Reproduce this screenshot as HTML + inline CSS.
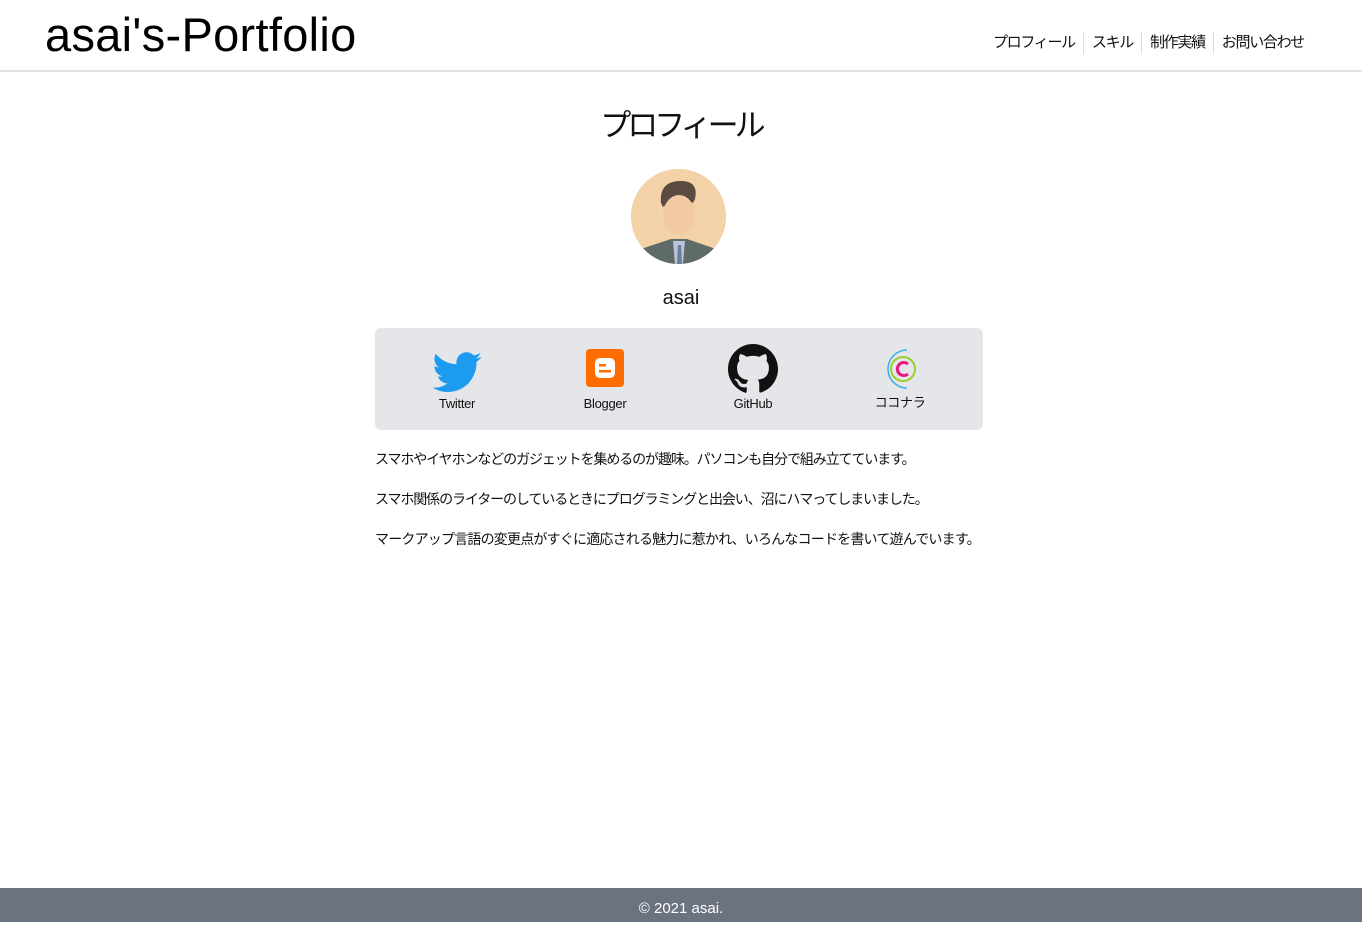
<!DOCTYPE html>
<html><head><meta charset="utf-8"><style>
*{margin:0;padding:0;box-sizing:border-box}
body{width:1362px;height:922px;position:relative;background:#fff;font-family:"Liberation Sans","Noto Sans CJK JP",sans-serif;color:#111;overflow:hidden}
header{height:72px;border-bottom:2px solid #e3e3e3;position:relative}
.logo{position:absolute;left:45px;top:7px;font-size:47px;color:#000;letter-spacing:0.3px}
nav{position:absolute;right:50px;top:32px;font-size:15px;display:flex;letter-spacing:-1.3px}
nav span{padding:0 8px;border-left:1px solid #ddd;line-height:22px}
nav span:first-child{border-left:none}
h1{position:absolute;top:100px;width:100%;text-align:center;font-weight:normal;font-size:31px;letter-spacing:-4px}
.av{position:absolute;left:631px;top:169px;width:95px;height:95px;border-radius:50%;overflow:hidden;background:#f3d5ac}
.name{position:absolute;top:287px;width:100%;text-align:center;font-size:20px}
.box{position:absolute;left:375px;top:328px;width:608px;height:102px;background:#e5e6ea;border-radius:6px}
.it{position:absolute;top:16px;width:100px;text-align:center;font-size:13px;letter-spacing:-0.3px}
.it svg{display:block;margin:0 auto 10px}
p{position:absolute;left:375px;font-size:14px;letter-spacing:-1.1px}
footer{position:absolute;bottom:0;left:0;width:100%;height:34px;background:#6b7280;color:#fff;text-align:center;font-size:15px;line-height:42px}
</style></head><body>
<header><div class="logo">asai's-Portfolio</div>
<nav><span>プロフィール</span><span>スキル</span><span>制作実績</span><span>お問い合わせ</span></nav></header>
<h1>プロフィール</h1>
<div class="av"><svg width="95" height="95"><rect width="95" height="95" fill="#f2d2a6"/><path d="M30 34 Q28 12 50 12 Q68 12 64 30 L62 34 Q48 26 32 38Z" fill="#5b4a42"/><ellipse cx="48" cy="46" rx="16" ry="20" fill="#f2c9a0"/><path d="M0 95 L10 80 L40 70 L56 70 L85 80 L95 95Z" fill="#5e6b68"/><path d="M42 72 L54 72 L52 95 L44 95Z" fill="#b8c3de"/><path d="M47 76 L50 76 L51 95 L46 95Z" fill="#6a7f96"/></svg></div>
<div class="name">asai</div>
<div class="box">
<div class="it" style="left:32px;top:24px"><svg width="50" height="41" viewBox="0 0 24 20" style="margin-bottom:3px"><path fill="#1d9bf0" d="M24 2.4a9.8 9.8 0 0 1-2.8.8A4.9 4.9 0 0 0 23.3.5a9.9 9.9 0 0 1-3.1 1.2A4.9 4.9 0 0 0 11.8 6 14 14 0 0 1 1.7.9a4.9 4.9 0 0 0 1.5 6.6 4.9 4.9 0 0 1-2.2-.6v.1a4.9 4.9 0 0 0 3.9 4.8 4.9 4.9 0 0 1-2.2.1 4.9 4.9 0 0 0 4.6 3.4A9.9 9.9 0 0 1 0 17.3 14 14 0 0 0 7.5 19.5c9 0 14-7.5 14-14v-.6A10 10 0 0 0 24 2.4z"/></svg>Twitter</div>
<div class="it" style="left:180px;top:20px"><svg width="40" height="40" viewBox="0 0 40 40" style="margin-bottom:8px"><rect x="1" y="1" width="38" height="38" rx="4" fill="#ff6d00"/><rect x="10" y="10" width="20" height="20" rx="5" fill="#fff"/><rect x="14" y="16" width="7" height="2.5" fill="#ff6d00"/><rect x="14" y="22" width="12" height="2.5" fill="#ff6d00"/></svg>Blogger</div>
<div class="it" style="left:328px;top:16px"><svg width="52" height="50" viewBox="0 0 16 16" style="margin-bottom:2px"><path fill="#111" d="M8 0C3.6 0 0 3.6 0 8c0 3.5 2.3 6.5 5.5 7.6.4.1.5-.2.5-.4v-1.4c-2.2.5-2.7-1-2.7-1-.4-.9-.9-1.2-.9-1.2-.7-.5.1-.5.1-.5.8.1 1.2.8 1.2.8.7 1.2 1.9.9 2.3.7.1-.5.3-.9.5-1.1-1.8-.2-3.6-.9-3.6-4 0-.9.3-1.6.8-2.1-.1-.2-.4-1 .1-2.1 0 0 .7-.2 2.2.8.6-.2 1.3-.3 2-.3s1.4.1 2 .3c1.5-1 2.2-.8 2.2-.8.4 1.1.2 1.9.1 2.1.5.6.8 1.3.8 2.1 0 3.1-1.9 3.7-3.6 3.9.3.3.5.8.5 1.5v2.2c0 .2.1.5.6.4C13.7 14.5 16 11.5 16 8c0-4.4-3.6-8-8-8z"/></svg>GitHub</div>
<div class="it" style="left:475px;top:20px"><svg width="42" height="42" viewBox="0 0 42 42" style="margin-bottom:2px"><path d="M28 2 A19 19 0 1 0 28 40" fill="none" stroke="#3ab0e6" stroke-width="1.5"/><circle cx="24" cy="21" r="12" fill="none" stroke="#9ccc2c" stroke-width="2"/><path d="M29 16 A6.5 6.5 0 1 0 29 26" fill="none" stroke="#e6197e" stroke-width="3"/></svg>ココナラ</div>
</div>
<p style="top:449px">スマホやイヤホンなどのガジェットを集めるのが趣味。パソコンも自分で組み立てています。</p>
<p style="top:489px">スマホ関係のライターのしているときにプログラミングと出会い、沼にハマってしまいました。</p>
<p style="top:529px;letter-spacing:-0.8px">マークアップ言語の変更点がすぐに適応される魅力に惹かれ、いろんなコードを書いて遊んでいます。</p>
<footer>© 2021 asai.</footer>
</body></html>
